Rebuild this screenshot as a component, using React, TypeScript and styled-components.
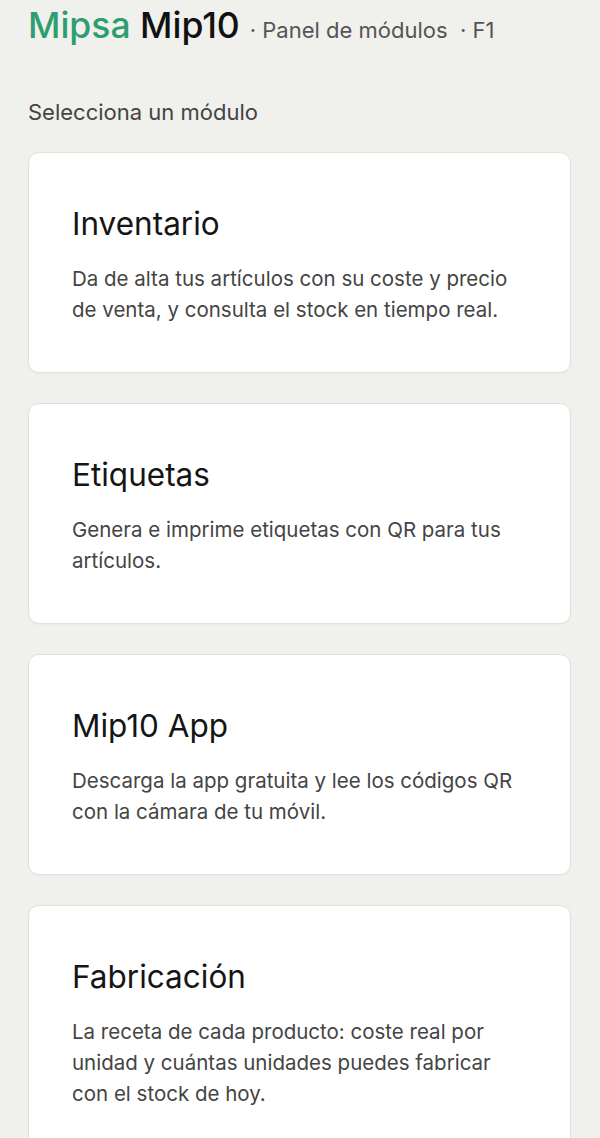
import React from "react";
import styled, { createGlobalStyle } from "styled-components";

const Global = createGlobalStyle`
  html, body { margin: 0; padding: 0; background: #f0f0ec; }
  body { font-family: Inter, "Noto Sans", Roboto, sans-serif; color: #1a1a1a; }
  * { box-sizing: border-box; }
`;

const Page = styled.div`
  padding: 5px 29px 0 28px;
  height: 1138px;
  overflow: hidden;
`;

const Header = styled.header`
  display: flex;
  align-items: baseline;
  gap: 10px;
`;

const Brand = styled.h1`
  margin: 0;
  font-size: 35.5px;
  font-weight: 500;
  color: #111;
  line-height: 42px;
`;

const Green = styled.span`
  color: #2e9e70;
`;

const Sub = styled.span`
  font-size: 22px;
  color: #555;
  white-space: pre;
`;

const Prompt = styled.p`
  margin: 52px 0 27px;
  font-size: 22px;
  color: #444;
  line-height: 26px;
`;

const List = styled.div`
  display: flex;
  flex-direction: column;
  gap: 30px;
`;

const Card = styled.article`
  background: #fff;
  border: 1px solid #e1e1dc;
  border-radius: 11px;
  box-shadow: 0 1px 2px rgba(0, 0, 0, 0.03);
  padding: 52px 42px 47px 43px;
  cursor: pointer;
`;

const Title = styled.h2`
  margin: 0 0 20px;
  font-size: 31.5px;
  font-weight: 400;
  color: #151515;
  line-height: 38px;
`;

const Desc = styled.p`
  margin: 0;
  font-size: 20.5px;
  line-height: 31px;
  color: #444;
`;

const modules = [
  {
    title: "Inventario",
    desc: "Da de alta tus artículos con su coste y precio de venta, y consulta el stock en tiempo real.",
  },
  { title: "Etiquetas", desc: "Genera e imprime etiquetas con QR para tus artículos." },
  {
    title: "Mip10 App",
    desc: "Descarga la app gratuita y lee los códigos QR con la cámara de tu móvil.",
  },
  {
    title: "Fabricación",
    desc: "La receta de cada producto: coste real por unidad y cuántas unidades puedes fabricar con el stock de hoy.",
  },
];

export default function App() {
  return (
    <>
      <Global />
      <Page>
        <Header>
          <Brand>
            <Green>Mipsa</Green> Mip10
          </Brand>
          <Sub>{"· Panel de módulos  · F1"}</Sub>
        </Header>
        <Prompt>Selecciona un módulo</Prompt>
        <List>
          {modules.map((m) => (
            <Card key={m.title}>
              <Title>{m.title}</Title>
              <Desc>{m.desc}</Desc>
            </Card>
          ))}
        </List>
      </Page>
    </>
  );
}
